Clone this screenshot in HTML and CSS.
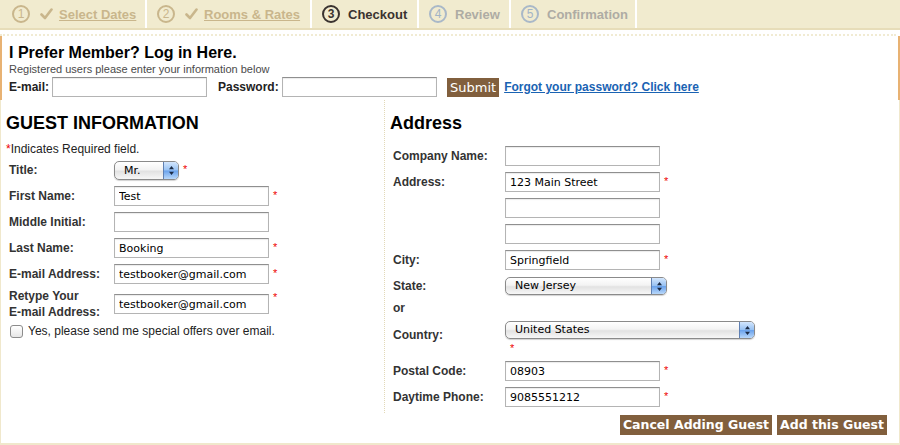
FILE: index.html
```html
<!DOCTYPE html>
<html>
<head>
<meta charset="utf-8">
<link rel="stylesheet" href="styles.css">
</head>
<body>
<div class="steps">
  <div class="step done s1"><span class="num">1</span><svg class="check" width="13" height="12" viewBox="0 0 13 12"><path d="M1.5 6.5 L5 10 L11.5 1.5" fill="none" stroke="#c9b68c" stroke-width="2.6" stroke-linecap="round" stroke-linejoin="round"/></svg><a href="#">Select Dates</a></div>
  <div class="step done s2"><span class="num">2</span><svg class="check" width="13" height="12" viewBox="0 0 13 12"><path d="M1.5 6.5 L5 10 L11.5 1.5" fill="none" stroke="#c9b68c" stroke-width="2.6" stroke-linecap="round" stroke-linejoin="round"/></svg><a href="#">Rooms &amp; Rates</a></div>
  <div class="step current s3"><span class="num">3</span><span>Checkout</span></div>
  <div class="step todo s4"><span class="num">4</span><span>Review</span></div>
  <div class="step todo s5"><span class="num">5</span><span>Confirmation</span></div>
</div>
<div class="dots"></div>
<div class="login">
  <h1>I Prefer Member? Log in Here.</h1>
  <p class="sub">Registered users please enter your information below</p>
  <div class="login-row">
    <label class="lbl-email">E-mail:</label><input class="field" type="text">
    <label class="lbl-pass">Password:</label><input class="field" type="password">
    <button class="btn btn-submit">Submit</button>
    <a class="forgot" href="#">Forgot your password? Click here</a>
  </div>
</div>
<div class="guest">
  <div class="cols">
    <div class="col col-left">
      <h2>GUEST INFORMATION</h2>
      <p class="note"><span class="req">*</span>Indicates Required field.</p>
      <div class="rows">
        <div class="row"><label>Title:</label><div class="sel sel-title"><span class="txt">Mr.</span><span class="stepper"><svg width="7" height="11" viewBox="0 0 7 11"><path d="M3.5 1 L6 4.2 L1 4.2 Z M3.5 10 L6 6.8 L1 6.8 Z" fill="#1b2a44"/></svg></span></div><span class="req mark">*</span></div>
        <div class="row"><label>First Name:</label><input class="field" type="text" value="Test"><span class="req mark">*</span></div>
        <div class="row"><label>Middle Initial:</label><input class="field" type="text"></div>
        <div class="row"><label>Last Name:</label><input class="field" type="text" value="Booking"><span class="req mark">*</span></div>
        <div class="row"><label>E-mail Address:</label><input class="field" type="text" value="testbooker@gmail.com"><span class="req mark">*</span></div>
        <div class="row row-tall"><label>Retype Your<br>E-mail Address:</label><input class="field" type="text" value="testbooker@gmail.com"><span class="req mark">*</span></div>
        <div class="check-row"><span class="cbox"></span><span>Yes, please send me special offers over email.</span></div>
      </div>
    </div>
    <div class="col col-right">
      <h2 class="addr">Address</h2>
      <div class="rows rows-right">
        <div class="row"><label>Company Name:</label><input class="field" type="text"></div>
        <div class="row"><label>Address:</label><input class="field" type="text" value="123 Main Street"><span class="req mark">*</span></div>
        <div class="row"><label></label><input class="field" type="text"></div>
        <div class="row"><label></label><input class="field" type="text"></div>
        <div class="row"><label>City:</label><input class="field" type="text" value="Springfield"><span class="req mark">*</span></div>
        <div class="row"><label>State:</label><div class="sel sel-state"><span class="txt">New Jersey</span><span class="stepper"><svg width="7" height="11" viewBox="0 0 7 11"><path d="M3.5 1 L6 4.2 L1 4.2 Z M3.5 10 L6 6.8 L1 6.8 Z" fill="#1b2a44"/></svg></span></div></div>
        <div class="row row-or"><label>or</label></div>
        <div class="row row-country"><label>Country:</label><div class="country-box"><div class="sel sel-country"><span class="txt">United States</span><span class="stepper"><svg width="7" height="11" viewBox="0 0 7 11"><path d="M3.5 1 L6 4.2 L1 4.2 Z M3.5 10 L6 6.8 L1 6.8 Z" fill="#1b2a44"/></svg></span></div><span class="req under">*</span></div></div>
        <div class="row row-postal"><label>Postal Code:</label><input class="field" type="text" value="08903"><span class="req mark">*</span></div>
        <div class="row"><label>Daytime Phone:</label><input class="field" type="text" value="9085551212"><span class="req mark">*</span></div>
      </div>
    </div>
  </div>
  <div class="actions">
    <button class="btn btn-big">Cancel Adding Guest</button>
    <button class="btn btn-big">Add this Guest</button>
  </div>
</div>
</body>
</html>
```
FILE: styles.css
```css
* { box-sizing: border-box; }
body {
  margin: 0;
  width: 900px;
  height: 445px;
  overflow: hidden;
  background: #fff;
  font-family: "Liberation Sans", Arial, sans-serif;
  color: #222;
}

/* ---------- steps bar ---------- */
.steps {
  display: flex;
  height: 30px;
  background: #f1ebcf;
  border-bottom: 2px solid #e7ddb9;
}
.step {
  display: flex;
  align-items: center;
  padding-left: 10px;
  border-right: 2px solid #fff;
  font-size: 13px;
  font-weight: bold;
}
.s1 { width: 147px; padding-left: 12px; }
.s2 { width: 165px; }
.s3 { width: 107px; }
.s4 { width: 92px; }
.s5 { width: 126px; }
.num {
  display: inline-flex;
  align-items: center;
  justify-content: center;
  width: 18px;
  height: 18px;
  border: 2px solid currentColor;
  border-radius: 50%;
  font-size: 12px;
  font-weight: normal;
  margin-right: 8px;
}
.check { margin-right: 6px; margin-left: 2px; }
.done { color: #c9b68c; }
.done a { color: #c9b68c; text-decoration: underline; }
.current { color: #3a3330; }
.current .num { border-color: #3a3330; font-weight: bold; }
.todo { color: #aeaca4; }
.todo .num { color: #a3b4c6; border-color: #a9b8c8; }
.todo .num + span { color: #aeaca4; }

.dots {
  margin-top: 4px;
  margin-right: 4px;
  border-top: 2px dotted #f1ebd3;
}

/* ---------- login ---------- */
.login {
  height: 64px;
  border-left: 2px solid #e8b273;
  border-right: 2px solid #e8b273;
  padding: 8px 0 0 7px;
}
.login h1 {
  margin: 0;
  font-size: 16px;
  line-height: 18px;
  color: #000;
}
.sub {
  margin: 1px 0 0;
  font-size: 11px;
  line-height: 13px;
  color: #4a4a4a;
}
.login-row {
  display: flex;
  align-items: center;
  height: 20px;
  margin-top: 1px;
}
.login-row label {
  font-size: 12px;
  font-weight: bold;
  color: #222;
}
.lbl-email { width: 43px; }
.lbl-pass { margin-left: 11px; width: 64px; }
.forgot {
  margin-left: 5px;
  font-size: 12px;
  font-weight: bold;
  color: #1a63b3;
  text-decoration: underline;
}

/* ---------- fields ---------- */
.field {
  width: 155px;
  height: 20px;
  border: 1px solid #b4b4b4;
  border-top-color: #8f8f8f;
  box-shadow: inset 0 1px 1px rgba(0,0,0,0.08);
  padding: 0 4px;
  margin: 0;
  font-family: "DejaVu Sans", "Liberation Sans", sans-serif;
  font-size: 11px;
  color: #000;
  background: #fff;
  outline: none;
}
.btn {
  border: 0;
  margin: 0;
  background: #815f3d;
  color: #fff;
  font-family: "DejaVu Sans", "Liberation Sans", sans-serif;
  cursor: pointer;
}
.login-row .btn-submit {
  margin-left: 10px;
  height: 19px;
  padding: 0 3px;
  font-size: 13px;
  line-height: 19px;
}
.btn-big {
  height: 20px;
  padding: 0 3px;
  font-size: 12.5px;
  font-weight: bold;
  line-height: 20px;
}

.req { color: #e00; }
.mark {
  font-size: 11px;
  margin-left: 4px;
  align-self: flex-start;
  line-height: 12px;
}

/* ---------- select ---------- */
.sel {
  display: flex;
  height: 19px;
  border: 1px solid #8a8a8a;
  border-radius: 5px;
  background: linear-gradient(#ffffff, #f3f3f3 45%, #e2e2e2 55%, #f7f7f7);
  box-shadow: 0 1px 1px rgba(0,0,0,0.18);
  font-family: "DejaVu Sans", "Liberation Sans", sans-serif;
  font-size: 11px;
  color: #000;
  overflow: hidden;
}
.sel .txt { flex: 1; padding-left: 9px; line-height: 17px; }
.stepper {
  width: 15px;
  display: flex;
  align-items: center;
  justify-content: center;
  border-left: 1px solid #5f80b3;
  background: linear-gradient(#d3e6fd, #98c2f3 48%, #6aa2ec 52%, #b9d8fa);
}
.sel-title { width: 65px; }
.sel-state { width: 162px; height: 18px; }
.sel-country { width: 250px; height: 18px; }
.sel-state .txt, .sel-country .txt { line-height: 16px; }

/* ---------- guest ---------- */
.guest {
  height: 345px;
  border-left: 1px solid #f0e8cc;
  border-right: 1px solid #f0e8cc;
  border-bottom: 2px solid #f0e8cc;
}
.cols {
  display: flex;
  height: 313px;
}
.col-left {
  width: 383px;
  padding: 12px 0 0 5px;
}
.col-right {
  flex: 1;
  padding: 12px 0 0 5px;
  border-left: 1px dotted #e2d9b8;
}
h2 {
  margin: 0;
  font-size: 18px;
  line-height: 22px;
  color: #000;
}
.note {
  margin: 8px 0 0;
  font-size: 12px;
  line-height: 14px;
}
.rows {
  display: flex;
  flex-direction: column;
  gap: 6px;
  margin-top: 4px;
}
.rows-right { margin-top: 12px; }
.row {
  display: flex;
  align-items: center;
  height: 20px;
}
.row label {
  width: 108px;
  padding-left: 3px;
  font-size: 12px;
  font-weight: bold;
  line-height: 16px;
  color: #333;
}
.rows-right .row label { width: 115px; }
.row .mark { margin-top: 3px; }
.row-tall { height: 32px; margin-top: -2px; }
.check-row {
  display: flex;
  align-items: center;
  height: 14px;
  margin-top: -2px;
  padding-left: 4px;
  font-size: 12px;
  color: #222;
}
.cbox {
  width: 13px;
  height: 13px;
  border: 1px solid #8c8c8c;
  border-radius: 3px;
  background: linear-gradient(#fff, #e6e6e6);
  margin-right: 5px;
}
.row-or { height: 12px; }
.row-country { height: 30px; align-items: center; }
.country-box {
  display: flex;
  flex-direction: column;
  align-self: flex-start;
  margin-top: 1px;
}
.under {
  font-size: 11px;
  line-height: 10px;
  margin-left: 5px;
  margin-top: 4px;
}
.row-postal { margin-top: 5px; }

.actions {
  display: flex;
  justify-content: flex-end;
  gap: 5px;
  margin-top: 2px;
  padding-right: 12px;
}
```
